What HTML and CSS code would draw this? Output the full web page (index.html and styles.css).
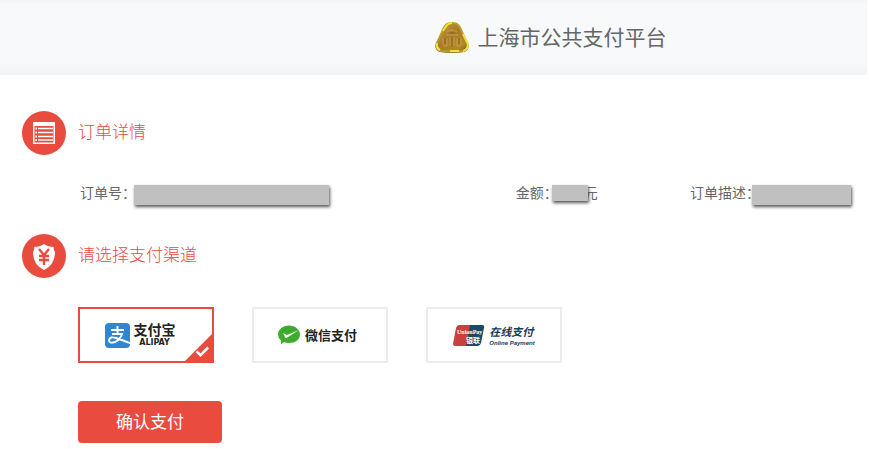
FILE: index.html
```html
<!DOCTYPE html>
<html lang="zh-CN">
<head>
    <meta charset="utf-8">
    <title>上海市公共支付平台</title>
    <link rel="stylesheet" href="styles.css">
</head>
<body>
    <header class="header">
        <svg class="logo" viewBox="0 0 34 34">
            <defs>
                <linearGradient id="gold" x1="0" y1="0" x2="1" y2="1">
                    <stop offset="0" stop-color="#c9a436"/>
                    <stop offset="0.45" stop-color="#a87a2a"/>
                    <stop offset="0.8" stop-color="#b08a28"/>
                    <stop offset="1" stop-color="#7d5a14"/>
                </linearGradient>
            </defs>
            <path d="M12 3Q17 0 22 3Q25 5 27 11L33 22Q35 29 29 31Q17 33 5 31Q-1 29 1 22L7 11Q9 5 12 3Z" fill="#806020"/>
            <path d="M12 3Q17 1 22 3Q25 5 27 11L32 22Q34 28 28 30Q17 31 6 30Q0 28 2 22L7 11Q9 5 12 3Z" fill="url(#gold)" stroke="#b99c2c" stroke-width="2"/>
            <path d="M8 10L12 4Q14 2 17 2M28 13L33 23Q33 29 28 30M15 30H24M2 22Q1 27 5 29" fill="none" stroke="#ede043" stroke-width="2"/>
            <path d="M8 17V22Q8 26 12 25V17M15 16V25M19 16V25M22 17V25Q26 26 26 22V17M12 11Q17 7 22 11M11 14H23" fill="none" stroke="#c9a04a" stroke-width="1"/>
            <path d="M10 17V23M17 16V26M24 17V23M14 12H20" fill="none" stroke="#8a6222" stroke-width="1"/>
        </svg>
        <h1 class="title">上海市公共支付平台</h1>
    </header>
    <main class="main">
        <div class="section-title">
            <svg class="section-icon" viewBox="0 0 44 44">
                <circle cx="22" cy="22" r="22" fill="#e94b3f"/>
                <path d="M11 11H33V33H11Z" fill="#fff"/>
                <path d="M12.500 15H31.500V31.500H12.500Z" fill="#e94b3f"/>
                <path d="M16 17.500H31M16 21.500H31M16 25.500H31M16 29H31" stroke="#fff" stroke-width="1.500"/>
                <path d="M13.500 17.500H15M13.500 21.500H15M13.500 25.500H15M13.500 29H15" stroke="#fff" stroke-width="2"/>
            </svg>
            <h2>订单详情</h2>
        </div>
        <div class="details">
            <div class="detail order">订单号：<span class="mask mask-order"></span></div>
            <div class="detail amount">金额：<span class="mask mask-amount"></span>元</div>
            <div class="detail">订单描述：<span class="mask mask-desc"></span></div>
        </div>
        <form>
            <div class="section-title">
                <svg class="section-icon" viewBox="0 0 44 44">
                    <circle cx="22" cy="22" r="22" fill="#e94b3f"/>
                    <path d="M22 10Q26 13 32 13Q31 15 33 18Q33 31 22 36Q11 31 11 18Q13 15 12 13Q18 13 22 10Z" fill="#fff"/>
                    <path d="M17 15L22 21L27 15M22 21V31M17 22H27M17 26H27" fill="none" stroke="#e94b3f" stroke-width="2.400"/>
                </svg>
                <h2>请选择支付渠道</h2>
            </div>
            <div class="channels">
                <label class="channel">
                    <input type="radio" name="channel" value="alipay" checked>
                    <svg width="25" height="25" viewBox="0 0 25 25">
                        <rect width="25" height="25" rx="4" fill="#2f86d2"/>
                        <path d="M6 7H19M12.500 3V11M7 11H17Q15 17 10 19Q4 21 4 17Q5 13 11 15Q17 17 25 20" fill="none" stroke="#fff" stroke-width="1.900"/>
                    </svg>
                    <span class="brand alipay">支付宝<small>ALIPAY</small></span>
                    <svg class="tick" viewBox="0 0 28 28">
                        <path d="M28 0V28H0Z" fill="#e94b3f"/>
                        <path d="M12 18L16 22L24 14" fill="none" stroke="#fff" stroke-width="2.600"/>
                    </svg>
                </label>
                <label class="channel">
                    <input type="radio" name="channel" value="wechat">
                    <svg width="24" height="20" viewBox="0 0 24 20">
                        <path d="M12 0.500C18 0.500 23 4.500 23 9.500S18 18 12 18Q9 18 7 17L4 19.500V15.500Q1 13 1 9.500C1 4.500 6 0.500 12 0.500Z" fill="#3dab2b"/>
                        <path d="M6 8L10 10L22 5L9.500 13Q8 13 8 12Z" fill="#fff"/>
                    </svg>
                    <span class="brand wechat">微信支付</span>
                    <svg class="tick" viewBox="0 0 28 28">
                        <path d="M28 0V28H0Z" fill="#e94b3f"/>
                        <path d="M12 18L16 22L24 14" fill="none" stroke="#fff" stroke-width="2.600"/>
                    </svg>
                </label>
                <label class="channel">
                    <input type="radio" name="channel" value="unionpay">
                    <svg width="32" height="21" viewBox="0 0 32 21">
                        <path d="M6 0H18L14 21H2Q0 21 0 19L3 3Q4 0 6 0Z" fill="#c9403f"/>
                        <path d="M17 0H29Q32 0 31 3L28 18Q27 21 25 21H13Z" fill="#1d4a63"/>
                        <text class="union-en" x="4" y="9">UnionPay</text>
                        <text class="union-cn" x="13" y="18">银联</text>
                    </svg>
                    <span class="brand union">在线支付<small>Online Payment</small></span>
                    <svg class="tick" viewBox="0 0 28 28">
                        <path d="M28 0V28H0Z" fill="#e94b3f"/>
                        <path d="M12 18L16 22L24 14" fill="none" stroke="#fff" stroke-width="2.600"/>
                    </svg>
                </label>
            </div>
            <button type="button" class="button">确认支付</button>
        </form>
    </main>
</body>
</html>
```
FILE: styles.css
```css
* {
    box-sizing: border-box;
}

body {
    margin: 0;
    background-color: #fff;
    color: #666;
    font-family: "Noto Sans CJK SC", sans-serif;
}

h1, h2 {
    margin: 0;
    font-weight: 400;
}

.header {
    display: flex;
    align-items: center;
    justify-content: center;
    gap: 9px;
    height: 75px;
    margin-right: 2px;
    padding-left: 234px;
    background: linear-gradient(#f1f2f4, #f7f9fb 4px, #f7f9fb 64px, #f1f2f4);
}

.logo {
    width: 34px;
    height: 34px;
}

.title {
    padding-bottom: 4px;
    font-size: 21px;
    line-height: 30px;
}

.main {
    padding: 36px 18px 6px 22px;
}

.section-title {
    display: flex;
    align-items: center;
    gap: 12px;
    color: #e94b3f;
}

.section-title h2 {
    padding-bottom: 4px;
    font-size: 17px;
    font-weight: 300;
    line-height: 24px;
}

.section-icon {
    width: 44px;
    height: 44px;
}

.details {
    display: flex;
    align-items: flex-start;
    height: 79px;
    padding: 30px 0 0 58px;
    font-size: 14px;
    line-height: 14px;
}

.detail {
    display: flex;
    align-items: flex-start;
    white-space: nowrap;
}

.order {
    flex: 5;
}

.amount {
    flex: 2;
}

.mask {
    height: 20px;
    margin-left: -4px;
    background-color: #c0c0c0;
    box-shadow: 1px 2px 3px #555;
}

.mask-order {
    width: 195px;
    margin-left: -2px;
}

.mask-amount {
    width: 36px;
    height: 16px;
    margin-left: -6px;
    margin-right: -4px;
    z-index: 1;
}

.mask-desc {
    width: 99px;
    margin-left: -8px;
}

.channels {
    display: flex;
    gap: 38px;
    padding: 29px 0 38px 56px;
}

.channel {
    position: relative;
    display: flex;
    align-items: center;
    justify-content: center;
    gap: 4px;
    width: 136px;
    height: 56px;
    border: 2px solid #ececec;
    cursor: pointer;
}

.channel:has(input:checked) {
    border-color: #e94b3f;
}

.channel input {
    position: absolute;
    opacity: 0;
    margin: 0;
}

.tick {
    display: none;
    position: absolute;
    right: 0;
    bottom: 0;
    width: 27px;
    height: 27px;
}

input:checked ~ .tick {
    display: block;
}

.brand {
    color: #222;
    font-size: 14px;
    font-weight: 700;
    line-height: 16px;
}

.brand small {
    display: block;
    font-size: 6px;
    line-height: 8px;
    text-align: center;
}

.alipay {
    margin-right: 12px;
}

.alipay small {
    font-family: "DejaVu Sans", sans-serif;
    font-size: 8px;
    line-height: 12px;
}

.wechat {
    margin-right: 6px;
    font-size: 13px;
}

.union {
    color: #173a5c;
    font-size: 11px;
    font-style: italic;
}

.union small {
    font-family: "Liberation Sans", sans-serif;
}

.union-en {
    fill: #fff;
    font: bold 6px "Liberation Serif", serif;
}

.union-cn {
    fill: #fff;
    font-size: 7px;
    font-weight: 700;
}

.button {
    display: block;
    width: 144px;
    height: 42px;
    margin-left: 56px;
    padding: 0 0 4px;
    border: none;
    border-radius: 4px;
    background-color: #e94b3f;
    color: #fff;
    font-family: inherit;
    font-size: 17px;
    cursor: pointer;
}
```
